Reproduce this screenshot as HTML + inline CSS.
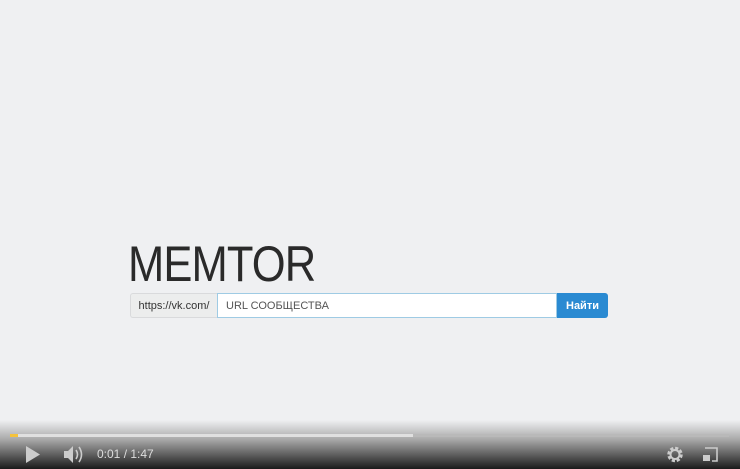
<!DOCTYPE html>
<html><head><meta charset="utf-8"><style>
body{margin:0;width:740px;height:469px;background:#eff0f2;position:relative;overflow:hidden;font-family:"Liberation Sans",sans-serif}
.logo{position:absolute;left:128px;top:236px;font-size:50px;color:#2a2a2a;letter-spacing:-1px;line-height:56px;transform:scaleX(0.87);transform-origin:left}
.grp{position:absolute;left:130px;top:293px;height:25px;display:flex;font-size:11px}
.add{width:87px;border:1px solid #d9dadc;border-right:none;background:#eceded;color:#333;display:flex;align-items:center;justify-content:center;border-radius:3px 0 0 3px;box-sizing:border-box}
.inp{width:340px;border:1px solid #9fcbe4;background:#fff;color:#555;box-sizing:border-box;padding-left:8px;display:flex;align-items:center}
.btn{width:51px;background:#2a8ad2;color:#fff;font-weight:bold;display:flex;align-items:center;justify-content:center;border-radius:0 3px 3px 0}
.bar{position:absolute;left:0;top:420px;width:740px;height:49px;background:linear-gradient(#eff0f2 0%,#a8a8a8 40%,#555 75%,#1a1a1a 100%)}
.prog{position:absolute;left:10px;top:434px;width:719px;height:3px;background:#b9b9b9}
.buf{position:absolute;left:10px;top:434px;width:403px;height:3px;background:#e0e0e0}
.play{position:absolute;left:10px;top:434px;width:8px;height:3px;background:#f5c33b}
.t{position:absolute;left:97px;top:447px;color:#ddd;font-size:12px}
</style></head><body>
<div class="logo">MEMTOR</div>
<div class="grp"><div class="add">https://vk.com/</div><div class="inp">URL СООБЩЕСТВА</div><div class="btn">Найти</div></div>
<div class="bar"></div>
<div class="prog"></div><div class="buf"></div><div class="play"></div>
<svg style="position:absolute;left:0;top:440px" width="740" height="29">
<path d="M26 6 L40 14.5 L26 23Z" fill="#ccc"/>
<path d="M64 11h4l5-5v17l-5-5h-4z" fill="#ccc"/>
<path d="M76 10q3 4.5 0 9M79 7q5 7.5 0 15" stroke="#ccc" stroke-width="1.6" fill="none"/>
<circle cx="675" cy="14.5" r="6" fill="none" stroke="#ccc" stroke-width="3.5" stroke-dasharray="3 1.7"/>
<circle cx="675" cy="14.5" r="4.5" fill="none" stroke="#ccc" stroke-width="2"/>
<path d="M705 8h12v13h-5" stroke="#ccc" stroke-width="1.6" fill="none"/>
<rect x="703" y="15" width="7" height="6" fill="#ccc"/>
</svg>
<div class="t">0:01 / 1:47</div>
</body></html>
